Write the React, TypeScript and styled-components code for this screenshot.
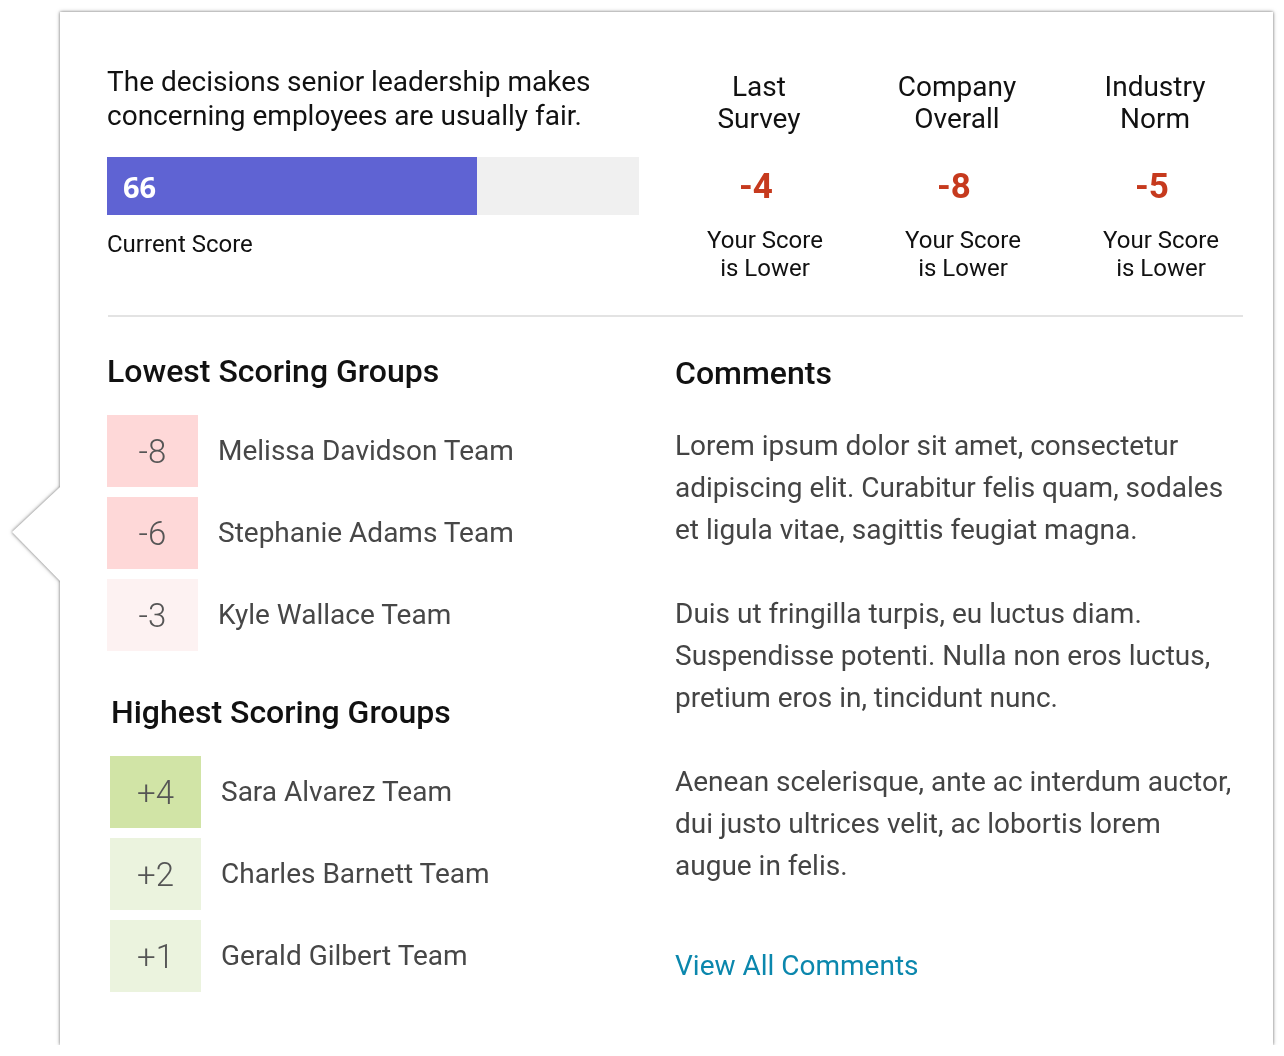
import React from 'react';
import styled, { createGlobalStyle } from 'styled-components';

const GlobalStyle = createGlobalStyle`
  html, body { margin: 0; padding: 0; background: #fff; }
  body { font-family: Roboto, "Noto Sans", Arial, sans-serif; color: #111; }
`;

const Page = styled.div`
  padding: 12px 0 0 60px;
`;

const Card = styled.div`
  position: relative;
  box-sizing: border-box;
  width: 1213px;
  height: 1033px;
  background: #fff;
  padding: 53px 19px 0 47px;
  filter: drop-shadow(0 0 1.5px rgba(0, 0, 0, 0.45)) drop-shadow(0 0 2px rgba(0, 0, 0, 0.2));
  &::before {
    content: '';
    position: absolute;
    left: -48px;
    top: 475px;
    width: 50px;
    height: 94px;
    background: #fff;
    clip-path: polygon(0 48%, 48px 0, 50px 0, 50px 100%, 48px 100%);
  }
`;

const Top = styled.div`
  display: grid;
  grid-template-columns: 553px repeat(3, 1fr);
`;

const ScoreBlock = styled.div`
  display: flex;
  flex-direction: column;
  width: 532px;
`;

const Question = styled.p`
  margin: 0;
  font-size: 28px;
  line-height: 34px;
  color: #111;
`;

const Track = styled.div`
  margin-top: 24px;
  height: 58px;
  background: #f0f0f0;
  display: flex;
`;

const Fill = styled.div`
  height: 100%;
  background: #5f63d3;
  display: flex;
  align-items: center;
  padding-left: 16px;
  box-sizing: border-box;
  color: #fff;
  font-family: "Open Sans", Roboto, sans-serif;
  font-weight: 700;
  font-size: 29px;
`;

const Caption = styled.div`
  margin-top: 15px;
  font-size: 24px;
  line-height: 28px;
  color: #111;
`;

const Stat = styled.div`
  display: flex;
  flex-direction: column;
  align-items: center;
  text-align: center;
  padding-top: 6px;
`;

const StatTitle = styled.div`
  font-size: 28px;
  line-height: 32px;
  color: #111;
`;

const StatValue = styled.div`
  margin-top: 32px;
  margin-right: 6px;
  font-size: 35px;
  line-height: 40px;
  font-weight: 700;
  color: #c63a1e;
`;

const StatNote = styled.div`
  margin-top: 19px;
  padding-left: 12px;
  font-size: 24px;
  line-height: 28px;
  color: #111;
`;

const Divider = styled.hr`
  margin: 33px 11px 0 1px;
  border: none;
  height: 2px;
  background: #e3e3e3;
`;

const Bottom = styled.div`
  display: grid;
  grid-template-columns: 568px 1fr;
  margin-top: 37px;
`;

const Section = styled.div<{ $shift?: number; $gap?: number }>`
  display: flex;
  flex-direction: column;
  padding-left: ${p => p.$shift ?? 0}px;
  margin-top: ${p => p.$gap ?? 0}px;
`;

const Heading = styled.h2<{ $indent?: number }>`
  margin: 0;
  padding-left: ${p => p.$indent ?? 0}px;
  font-size: 32px;
  line-height: 34px;
  font-weight: 500;
  color: #111;
`;

const GroupList = styled.div`
  margin-top: 27px;
  display: flex;
  flex-direction: column;
  gap: 10px;
`;

const GroupRow = styled.div`
  display: flex;
  align-items: center;
  gap: 20px;
`;

const Badge = styled.div<{ $bg: string }>`
  width: 91px;
  height: 72px;
  flex: none;
  background: ${p => p.$bg};
  display: flex;
  align-items: center;
  justify-content: center;
  font-size: 33px;
  font-weight: 300;
  color: #555;
`;

const GroupName = styled.div`
  font-size: 28px;
  color: #474747;
  margin-top: -2px;
`;

const Comments = styled.div`
  display: flex;
  flex-direction: column;
  padding-top: 2px;
`;

const CommentText = styled.p`
  margin: 35px 0 0;
  max-width: 568px;
  font-size: 28px;
  line-height: 42px;
  color: #444;
  & + & {
    margin-top: 42px;
  }
`;

const ViewAll = styled.a`
  margin-top: 58px;
  font-size: 28px;
  line-height: 42px;
  color: #0b87ad;
  text-decoration: none;
  cursor: pointer;
`;

const stats = [
  { title: ['Last', 'Survey'], value: '-4' },
  { title: ['Company', 'Overall'], value: '-8' },
  { title: ['Industry', 'Norm'], value: '-5' },
];

const lowest = [
  { v: '-8', name: 'Melissa Davidson Team', bg: '#fed8d8' },
  { v: '-6', name: 'Stephanie Adams Team', bg: '#fed8d8' },
  { v: '-3', name: 'Kyle Wallace Team', bg: '#fdf2f2' },
];

const highest = [
  { v: '+4', name: 'Sara Alvarez Team', bg: '#d1e4a6' },
  { v: '+2', name: 'Charles Barnett Team', bg: '#ebf3de' },
  { v: '+1', name: 'Gerald Gilbert Team', bg: '#ebf3de' },
];

const comments = [
  'Lorem ipsum dolor sit amet, consectetur adipiscing elit. Curabitur felis quam, sodales et ligula vitae, sagittis feugiat magna.',
  'Duis ut fringilla turpis, eu luctus diam. Suspendisse potenti. Nulla non eros luctus, pretium eros in, tincidunt nunc.',
  'Aenean scelerisque, ante ac interdum auctor, dui justo ultrices velit, ac lobortis lorem augue in felis.',
];

export default function App() {
  const score = 66;
  return (
    <>
      <GlobalStyle />
      <Page>
        <Card>
          <Top>
            <ScoreBlock>
              <Question>
                The decisions senior leadership makes concerning employees are usually fair.
              </Question>
              <Track>
                <Fill style={{ width: 370 }}>{score}</Fill>
              </Track>
              <Caption>Current Score</Caption>
            </ScoreBlock>
            {stats.map(s => (
              <Stat key={s.value + s.title[0]}>
                <StatTitle>
                  {s.title[0]}
                  <br />
                  {s.title[1]}
                </StatTitle>
                <StatValue>{s.value}</StatValue>
                <StatNote>
                  Your Score
                  <br />
                  is Lower
                </StatNote>
              </Stat>
            ))}
          </Top>
          <Divider />
          <Bottom>
            <div>
              <Section>
                <Heading>Lowest Scoring Groups</Heading>
                <GroupList>
                  {lowest.map(g => (
                    <GroupRow key={g.name}>
                      <Badge $bg={g.bg}>{g.v}</Badge>
                      <GroupName>{g.name}</GroupName>
                    </GroupRow>
                  ))}
                </GroupList>
              </Section>
              <Section $shift={3} $gap={44}>
                <Heading $indent={1}>Highest Scoring Groups</Heading>
                <GroupList>
                  {highest.map(g => (
                    <GroupRow key={g.name}>
                      <Badge $bg={g.bg}>{g.v}</Badge>
                      <GroupName>{g.name}</GroupName>
                    </GroupRow>
                  ))}
                </GroupList>
              </Section>
            </div>
            <Comments>
              <Heading>Comments</Heading>
              {comments.map(c => (
                <CommentText key={c}>{c}</CommentText>
              ))}
              <ViewAll>View All Comments</ViewAll>
            </Comments>
          </Bottom>
        </Card>
      </Page>
    </>
  );
}
